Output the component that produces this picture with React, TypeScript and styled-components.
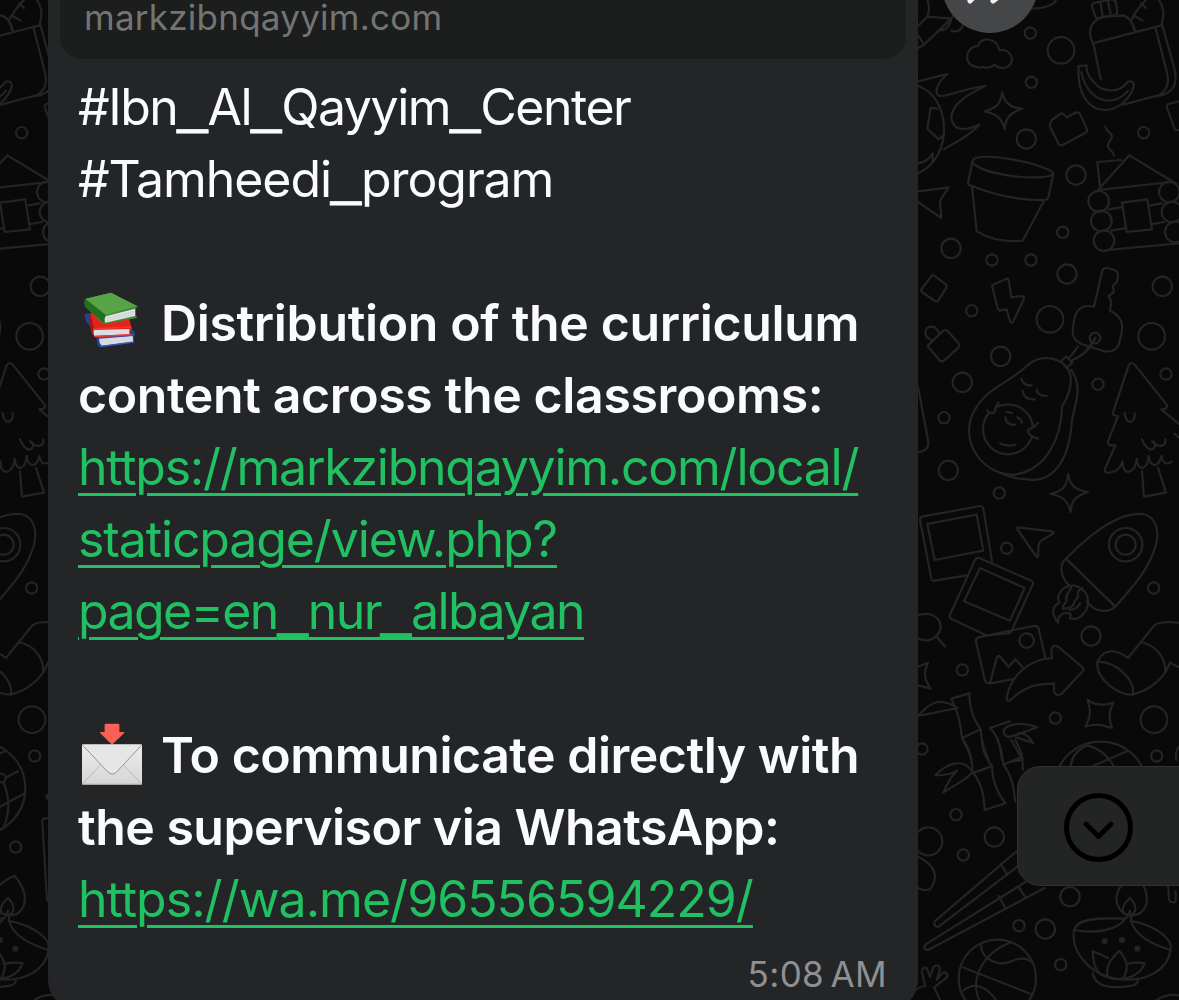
import React from 'react';
import styled, { createGlobalStyle } from 'styled-components';

const GlobalStyle = createGlobalStyle`
  body {
    margin: 0;
    background: #090909;
  }
`;

const Chat = styled.main`
  position: relative;
  width: 1179px;
  height: 1000px;
  overflow: hidden;
  background: #090909;
  font-family: Inter, 'Liberation Sans', sans-serif;
`;

const Wallpaper = styled.svg`
  position: absolute;
  inset: 0;
  fill: none;
  stroke: #242424;
  stroke-width: 6.6;
  stroke-linecap: round;
  stroke-linejoin: round;

  .solid {
    fill: #090909;
  }

  .dot {
    fill: #242424;
    stroke: none;
  }
`;

const Bubble = styled.article`
  position: relative;
  box-sizing: border-box;
  width: 870px;
  height: 1010px;
  margin-left: 48px;
  padding: 0 12px;
  border-radius: 0 0 30px 30px;
  background: #242527;
`;

const LinkPreview = styled.div`
  box-sizing: border-box;
  height: 59px;
  padding: 0 24px;
  border-radius: 0 0 22px 22px;
  background: #1c1e1d;
  color: #747573;
  font-size: 35px;
  line-height: 35px;
  letter-spacing: 0.25px;
`;

const Message = styled.div`
  display: flex;
  flex-direction: column;
  padding: 12px 18px 0;
`;

const Line = styled.div<{ $spacing?: number; $bold?: boolean }>`
  display: flex;
  align-items: center;
  height: 72px;
  color: #fafbfd;
  font-size: 50px;
  font-weight: ${(p) => (p.$bold ? 600 : 400)};
  letter-spacing: ${(p) => p.$spacing ?? 0}px;
  line-height: 72px;
  white-space: pre;
`;

const Anchor = styled.a`
  color: #21c063;
  text-decoration: underline;
  text-decoration-thickness: 3px;
  text-underline-offset: 8px;
`;

const Underscore = styled.span`
  font-family: 'Liberation Sans', sans-serif;
  font-size: 54px;
  letter-spacing: 0;
  line-height: 0;
  vertical-align: 3.5px;
  text-decoration-skip-ink: none;
  -webkit-text-stroke: 0.8px currentColor;
`;

const Emoji = styled.svg`
  flex: none;
  width: 66px;
  height: 66px;
  margin-left: 1px;
  margin-right: 16px;
`;

const Time = styled.time`
  display: block;
  margin-top: 18px;
  padding-right: 19px;
  color: #8f9092;
  font-size: 35px;
  line-height: 42px;
  letter-spacing: 0.4px;
  word-spacing: -4px;
  text-align: right;
`;

const ForwardButton = styled.button`
  position: absolute;
  top: -63px;
  left: 942px;
  width: 96px;
  height: 96px;
  padding: 0;
  border: 0;
  border-radius: 50%;
  background: #454648;
`;

const ScrollDown = styled.button`
  position: absolute;
  top: 766px;
  left: 1017px;
  display: flex;
  align-items: center;
  box-sizing: border-box;
  width: 190px;
  height: 120px;
  padding: 0 0 0 45px;
  border: 1px solid #303231;
  border-radius: 23px;
  background: #232524;
`;

// The wallpaper repeats every 1122px; drawn at three times its size.
const Tile = () => (
  <g transform="translate(910 0) scale(0.33333)">
    <g>
      <path d="M52 0q10 25 0 50l-28 28M52 50l72 6M124 56l-82 78-18 10M42 134L26 108M124 56c-5 25-15 36-34 34M124 92c16 6 30 0 34-16M124 56l10-16M370 26c30 0 60-10 68-26" />
      <path d="M196 200c-36-6-32-60 8-62 4-26 54-30 64 12 40-6 54 46 14 54-16 2-22-4-28-10-12 10-22 12-34 6-10 4-16 4-24 0z" />
      <circle cx="361" cy="99" r="17" />
      <circle cx="453" cy="151" r="40" />
      <circle cx="364" cy="247" r="17" />
      <circle cx="349" cy="417" r="29" />
      <circle cx="701" cy="398" r="17" />
      <circle cx="498" cy="525" r="29" />
      <circle cx="458" cy="697" r="17" />
      <circle cx="123" cy="745" r="29" />
      <path d="M24 244l88-22c-36 30-44 70-14 66 40-8 80-26 128-30-60 28-100 56-102 94 4 44 44 40 84 22-28 32-70 52-106 74" />
      <path d="M24 258c98 30 110 214 0 262M24 490c20-4 36-16 44-30v24M82 326l-20-2-10 62 34 32 14-12" />
      <path d="M276 276c6 32 24 48 60 50-36 12-50 28-52 62-8-34-24-46-60-54 36-10 50-24 52-58z" />
      <path d="M426 360l24-18q8-4 12 2l8 8 26-14q12-4 16 8l18 40q4 10-6 14l-64 34q-10 6-16-6l-22-44q-6-14 4-24z" />
      <path d="M586 380c4 18 22 18 20 32-4 12-18 18-10 32 6 10 14 10 16 22" />
      <path d="M24 574l92-12c-14 22-26 38-26 42l4 50L24 606" />
      <path d="M188 482l-14 66q0 8 12 10 110 44 218 42 10 0 12-12l14-66c-2-26-230-74-242-40zM188 486c20 36 190 60 240 38M186 560l14 134c40 24 90 32 138 28l64-120" />
      <path d="M570 560l-8-74 72-6M564 570l94-104 142 86M564 570l220-24" />
      <circle cx="566" cy="604" r="31" />
      <circle cx="574" cy="663" r="31" />
      <circle cx="582" cy="722" r="31" />
      <circle cx="778" cy="576" r="31" />
      <circle cx="786" cy="636" r="31" />
      <circle cx="796" cy="696" r="31" />
      <path d="M596 628l38-6M722 616l34-6M604 692l44-8M728 672l34-6M590 750l217-20M636 608l76-10 14 90-76 8z" />
      <path d="M556 50l-10-30q-2-10 10-12l50-10q10 0 12 10l4 26q0 10-10 12l-42 8q-12 4-14-4zM572 10l6 40M594 4l8 40" />
      <path d="M550 130c-24-40-2-70 30-80l60-4c20 8 30 24 32 44M548 130l206-54M550 130l28 136M736 82l36 140c8 40-12 62-42 68l-90 24M756 72l36 130c14 50-2 76-46 86" />
      <path d="M662 62C680 30 700 4 720-10M740-10c24 30 24 54 14 86M674 48l24 14M694 10l14 14M676 92c-6-10-8-20-14-30" />
      <path className="solid" d="M506 198l24-2c-4 20 14 50 44 70 36 12 60 6 78-20 14-6 22 2 18 18-16 40-50 66-86 66-50-2-84-50-78-132zM514 216c18 90 96 110 140 56" />
      <path d="M807 304l-32 8q-6 2-4 12l24 66h12" />
    </g>
    <g transform="translate(0 750)">
      <circle cx="246" cy="30" r="17" />
      <circle cx="363" cy="30" r="17" />
      <circle cx="471" cy="72" r="29" />
      <circle cx="757" cy="109" r="29" />
      <circle cx="185" cy="182" r="17" />
      <circle cx="420" cy="208" r="40" />
      <circle cx="725" cy="259" r="40" />
      <circle cx="272" cy="319" r="29" />
      <circle cx="157" cy="397" r="29" />
      <circle cx="564" cy="403" r="17" />
      <circle cx="768" cy="372" r="17" />
      <circle cx="102" cy="503" r="17" />
      <circle cx="115" cy="661" r="29" />
      <circle cx="268" cy="729" r="17" />
      <path d="M66 76q4-2 6 0l36 28q4 4 2 8l-26 40q-4 4-8 2l-40-28q-4-4-2-8z" />
      <path d="M246 106l44-20q6 0 6 6l8 50 30-4q8 0 8 8l-32 68q-6 8-10 0l-10-36-22 4q-4-2-6-10z" />
      <path d="M56 284l44-42q6-4 12 0l34 38q4 6 0 12l-44 40q-6 4-12 0l-34-40q-4-4 0-8zM68 272c-32-12-26-44-2-42 16 2 20 12 22 24" />
      <path d="M552 170l24-104q4-14 16-12l20 6q12 4 12 14l-2 20-14 14 4 18-16 12 8 18-4 26c48 22 40 56 26 102-8 20-24 22-42 20l-70-22c-36-16-26-48-20-80 10-32 30-38 58-32z" />
      <circle cx="555" cy="264" r="16" />
      <path d="M556 264c-12 28-36 52-68 66M556 264c-10 18-18 26-24 32M504 290l-28 36M452 334l16-14 20 18-18 16z" />
      <path d="M350 348c48-44 112-20 128 16 12 36-4 80-22 106-2 90-44 190-142 204-94 4-170-100-122-190 40-74 94-76 158-136z" />
      <path d="M484 360c40 60 4 110 0 170-10 108-60 170-130 158-34 0-60-8-84-20" />
      <circle cx="294" cy="538" r="75" />
      <path d="M334 386c4 14 14 22 30 20M338 422c2 18 14 28 36 26M380 418c0 14 10 20 30 20M288 486q10 0 18 4M286 502c2 18 14 24 30 22M322 502q10 4 14 16M270 580c14 8 30 8 46 4" />
      <path className="solid" d="M232 480c4 12 24 14 24-2 0-6 4-14 10-20M384 518c-4 8-14 14-28 20-6 10 4 22 28 28" />
      <path d="M24 410l30 160c6 26-14 36-30 36" />
      <path d="M656 346q8-14 20 0l94 118q6 12-16 14l60 50M656 346l-46 138q-6 14 14 14l-30 76q-4 14 22 12l-30 68q-6 20 20 12 20-2 32-32c-4 46 40 40 42-8 4 42 32 34 36-8 4 36 30 36 38 0 6 30 22 24 32 16M644 490c4 38 34 30 30 0M696 568c12 30 30 38 38 24 4-14-4-18-8-18 20 22 42 16 40-6M696 664l6 76 66-12-24-74M794 552l13 10" />
      <path d="M474 672c6 34 20 48 60 54-36 12-50 24-52 60-8-34-24-48-60-54 36-8 50-24 52-60z" />
    </g>
    <g transform="translate(0 1500)">
      <path d="M36 50l174-32q8 0 10 8l26 158M36 50q-6 2-6 10l34 176q2 8 10 6l96-16M52 72l148-28 20 108-146 28z" />
      <path className="solid" d="M196 178q4-6 12-4l156 68q8 4 4 12l-64 140q-4 8-12 6l-64 6-104-50q-8-4-4-12zM210 204l134 60-44 98-138-58z" />
      <path d="M322 82l104 12q6 2 4 6l-36 22q-8 6-8 12l-2 36q-4 2-6-2l-56-80z" />
      <circle cx="290" cy="145" r="17" />
      <circle cx="731" cy="264" r="17" />
      <circle cx="543" cy="408" r="29" />
      <circle cx="157" cy="510" r="17" />
      <circle cx="436" cy="654" r="17" />
      <circle cx="732" cy="659" r="40" />
      <circle cx="740" cy="768" r="17" />
      <circle cx="36" cy="747" r="17" />
      <path d="M468 176C530 112 620 34 700 42c40 10 54 56 30 116-20 56-60 100-112 160-20 20-60 24-88-14M468 176l148 144M468 176c-24 20-14 60 12 82" />
      <circle cx="647" cy="134" r="50" />
      <circle cx="647" cy="134" r="30" />
      <path d="M444 368c-24-30-14-52 4-60l-4-16c12-40 46-38 60-32 36 16 40 60 12 86-12 12-26 12-36 8l2-12c-20-10-40 4-38 26zM458 326c20 0 34-8 36-22l10-14c-4-18 6-22 14-26M458 320l12-18c-6-12 4-20 14-40M478 330c18-2 28-10 32-20" />
      <path d="M24 346c52-20 90 30 54 62-16 16-36 16-54 6M78 408l28 32M24 500l30-12c-14 30-12 50 8 78l-38-10" />
      <path d="M206 412l164-34q12-2 16 8l20 88M206 412q-10 4-8 14l26 112q4 14 18 12l64-12M240 550l20-76q4-10 10-4l26 30 20-22 26 28" />
      <circle cx="350" cy="422" r="22" />
      <path className="solid" d="M290 592c14-70 70-114 136-118l-2-26q4-16 20-8l74 62q6 6 0 12l-64 68q-18 8-22-8v-24c-60 2-90 10-130 50-8 6-12 2-12-8z" />
      <path d="M562 486c20-44 58-38 92-12l74-92c12-16 36-18 79-14M562 486c-6 50 62 100 106 98 44-12 74-32 100-70l12-26 27 14M562 486c54-4 116 54 106 98M692 426c44 10 74 42 74 88" />
      <path d="M532 600c24 16 50 18 78 8-14 28-14 46-4 76-30-10-52-14-80-4 16-32 18-46 6-80z" />
      <path d="M24 648c40-46 70-56 118-24l-118 24M134 620l-10-24 54-16c0 50 14 78 34 108l-56 26c-4-34-10-70-22-94M156 714c22 30 26 50 28 66M212 690c2 32 10 60 24 90M240 684l60-20M240 684c30 30 30 60 36 96M304 720l34 60-30 4M284 686c30-24 70-14 98-4-36 14-60 22-82 28-14 4-24-14-16-24zM318 712l50 16c-14-24-30-30-44-28" />
      <path d="M807 740q-12 14-8 40" />
    </g>
    <g transform="translate(0 2220)">
      <path d="M158 0c22 34 28 60 30 96 30 38 34 76 36 114l62-20c-30-38-40-76-40-112-24-30-28-50-30-78M192 98l50-18M262 0c14 24 14 50 18 74 28 36 30 70 36 110M280 74l54-22M316 0c14 30 24 36 22 90M188 96c-30-46-80-24-112 10 30 0 50-4 66-14-20 18-30 36-42 66 30-22 64-34 88-62M340 0l30 8" />
      <circle cx="138" cy="224" r="17" />
      <circle cx="253" cy="291" r="29" />
      <circle cx="160" cy="345" r="17" />
      <circle cx="55" cy="304" r="42" />
      <circle cx="480" cy="470" r="29" />
      <circle cx="327" cy="557" r="17" />
      <circle cx="406" cy="567" r="29" />
      <circle cx="452" cy="674" r="17" />
      <circle cx="683" cy="321" r="17" />
      <circle cx="572" cy="145" r="140" />
      <path d="M482 80c4-40 30-56 50-64 40 10 70 40 80 66M550 78l100-44M690 94l-34 18M636 200l75-40M646 125c20 50 20 90 0 140" />
      <circle cx="640" cy="114" r="13" />
      <path d="M24 350c50 24 66 60 36 98q-16 6-36-4" />
      <path d="M74 544l250-214M86 560l270-206M74 544q-4 18 12 16M272 372l20 32M46 614l300-188M54 630l350-186M46 614q-8 16 8 16M266 468l20 36M326 440l20 32" />
      <circle cx="262" cy="715" r="116" />
      <path d="M212 612c2 50 56 70 96 50 26-10 46-6 60 6M304 606c-100 40-130 130-86 190M158 682l210 82M160 752c30-26 70-18 106 40" />
      <path d="M0 770q20-30 46-32l-10-40c0-18 14-20 18-4l6 16 8-22c6-20 26-12 20 6l-8 26 14-18c14-14 24 4 12 14l-34 26 24 50" />
      <path d="M494 570c4-34 70-38 152-34 10-6 10-16 14-24M494 570c64 12 130 0 152-34M662 528c0 36 30 76 120 102M670 544c60 12 120 50 112 86-10 60-70 96-150 88-90-10-150-80-140-148M660 520q6 8 2 24M548 700c10 50 80 44 122 36q10-2 14-14" />
      <path d="M640 520c-40-40-20-90 40-112 30 34 44 80 14 108-10 12-40 12-54 4zM660 474c-28 24-28 50-4 50 24 0 28-26 4-50zM594 654c-14-8-28-14-46-20 2 40 10 74 50 78M594 712c-10-34 10-56 34-80 24 30 30 50 12 82-14 4-34 4-46-2zM648 672c20-4 36-6 56-2-8 20-24 40-62 46" />
      <circle className="dot" cx="584" cy="604" r="9" />
      <circle className="dot" cx="636" cy="600" r="9" />
      <circle className="dot" cx="682" cy="626" r="9" />
      <circle className="dot" cx="781" cy="170" r="9" />
      <path d="M790 235h-22q-6 2-5 10l14 235q8 12 20 4v-30M740 780q30-20 67-14" />
    </g>
  </g>
);

const Books = () => (
  <Emoji viewBox="60 60 198 198" aria-label="books">
    <path d="M76 134l8-4 100-2 44 62-6 28-96 14-10-4-8-46-26-26z" fill="#253f96" />
    <path d="M120 206l101-8 2 17-95 12q-8-8-8-21z" fill="#d8dae2" />
    <path d="M116 203l105-8 4-4M122 230l104-14" stroke="#3857b4" strokeWidth="4" fill="none" />
    <path d="M94 130l112-2 12 48-10 22-102 2-6-22z" fill="#e3231c" />
    <path d="M94 130l10 42-2 26-6-14-6-30z" fill="#a11814" />
    <path d="M105 180l106-3v16l-106 4q-3-8 0-17z" fill="#dddde3" />
    <path d="M102 177l115-6M106 200l112-6" stroke="#ec3b2c" strokeWidth="4" fill="none" />
    <path d="M80 86l76-18 82 42-8 4 2 26 3 4-100 18q-6-2-10-8L80 112q-7-16 0-26z" fill="#3a8c2e" />
    <path d="M80 86l76-18 78 40-94 27z" fill="#56a447" />
    <path d="M80 88l60 47-4 25-56-48q-6-14 0-24z" fill="#246e20" />
    <path d="M140 139l88-23v22l-89 20q-5-9 1-19z" fill="#e1e2e5" />
    <path d="M142 146l85-22M142 152l85-20" stroke="#b9bcc0" strokeWidth="1.5" />
  </Emoji>
);

const IncomingEnvelope = () => (
  <Emoji viewBox="57 36 198 198" aria-label="incoming envelope">
    <defs>
      <linearGradient id="paper" x1="0" y1="0" x2="0" y2="1">
        <stop offset="0" stopColor="#ececec" />
        <stop offset="1" stopColor="#d6d6d6" />
      </linearGradient>
    </defs>
    <rect x="66" y="103" width="180" height="121" rx="3" fill="url(#paper)" />
    <path d="M68 221l54-57M244 221l-54-57" stroke="#b3b3b3" strokeWidth="2.5" />
    <path d="M68 105l76 80q13 12 26 0l74-80z" fill="#e6e6e6" />
    <path d="M68 106l76 80q13 12 26 0l74-80" stroke="#949494" strokeWidth="3" fill="none" />
    <path d="M67 222.500h178" stroke="#aaa" strokeWidth="2" />
    <path d="M134 44q0-3 3-3h38q3 0 3 3v22h14q3 1 0 4l-33 31q-3 2-6 0l-32-31q-3-4 0-4h13z" fill="#fb6056" />
  </Emoji>
);

export default function App() {
  return (
    <>
      <GlobalStyle />
      <Chat>
        <Wallpaper width="1179" height="1000" viewBox="0 0 1179 1000">
          <Tile />
          <g transform="translate(-1122 0)">
            <Tile />
          </g>
        </Wallpaper>

        <Bubble>
          <LinkPreview>markzibnqayyim.com</LinkPreview>
          <Message>
            <Line $spacing={-1.46}>
              <span>
                #Ibn<Underscore>_</Underscore>Al<Underscore>_</Underscore>Qayyim
                <Underscore>_</Underscore>Center
              </span>
            </Line>
            <Line $spacing={-1.09}>
              <span>
                #Tamheedi<Underscore>_</Underscore>program
              </span>
            </Line>
            <Line />
            <Line $bold $spacing={-0.36}>
              <Books />
              Distribution of the curriculum
            </Line>
            <Line $bold $spacing={-0.38}>content across the classrooms:</Line>
            <Line $spacing={-1.25}>
              <Anchor>https://markzibnqayyim.com/local/</Anchor>
            </Line>
            <Line $spacing={-1.13}>
              <Anchor>staticpage/view.php?</Anchor>
            </Line>
            <Line $spacing={-1.58}>
              <Anchor>
                page=en<Underscore>_</Underscore>nur<Underscore>_</Underscore>albayan
              </Anchor>
            </Line>
            <Line />
            <Line $bold $spacing={-0.5}>
              <IncomingEnvelope />
              To communicate directly with
            </Line>
            <Line $bold $spacing={-0.53}>the supervisor via WhatsApp:</Line>
            <Line $spacing={-0.98}>
              <Anchor>https://wa.me/96556594229/</Anchor>
            </Line>
          </Message>
          <Time>5:08 AM</Time>
        </Bubble>

        <ForwardButton aria-label="Forward">
          <svg width="96" height="96" viewBox="0 0 96 96">
            <path
              d="M31 61l-3 3M55 61l-4 3"
              stroke="#f1f1f2"
              strokeWidth="5"
              strokeLinecap="round"
            />
          </svg>
        </ForwardButton>

        <ScrollDown aria-label="Scroll to latest">
          <svg width="71" height="71" viewBox="0 0 71 71" fill="none" stroke="#000">
            <circle cx="35.500" cy="36.500" r="32" strokeWidth="5" />
            <path
              d="M23 33l12.500 12.500L48 33"
              strokeWidth="4.800"
              strokeLinecap="round"
              strokeLinejoin="round"
            />
          </svg>
        </ScrollDown>
      </Chat>
    </>
  );
}
